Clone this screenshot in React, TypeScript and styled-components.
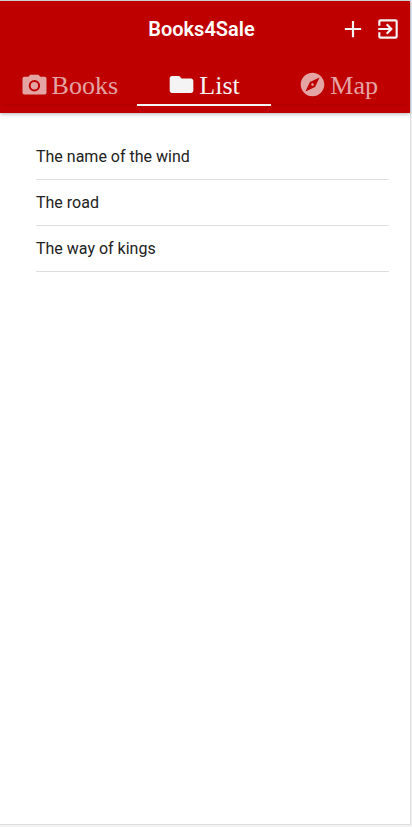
import React, { useState } from "react";
import styled, { createGlobalStyle } from "styled-components";
import { IoMdAdd, IoMdCompass, IoMdExit, IoMdFolder } from "react-icons/io";

const GlobalStyle = createGlobalStyle`
  * { box-sizing: border-box; }
  body { margin: 0; background: #f1f1f1; }
`;

const Page = styled.div`
  display: flex;
  flex-direction: column;
  min-height: calc(100vh - 2px);
  margin: 0 1px 2px 0;
  border: 1px solid #dedede;
  border-left: 0;
  background: #fff;
  font-family: Roboto, sans-serif;
`;

const Header = styled.header`
  background: #bf0000;
  color: #f4f4f4;
  box-shadow: 0 1px 4px rgba(0, 0, 0, 0.3);
`;

const Toolbar = styled.div`
  display: grid;
  grid-template-columns: 1fr auto 1fr;
  align-items: center;
  height: 56px;
  padding: 0 9px 0 8px;
`;

const Title = styled.h1`
  grid-column: 2;
  margin: 0;
  padding-right: 6px;
  color: #fff;
  font-size: 20px;
  line-height: 24px;
  font-weight: 600;
`;

const Actions = styled.div`
  display: flex;
  justify-content: flex-end;
  gap: 9px;
`;

const IconButton = styled.button`
  display: flex;
  padding: 0;
  border: 0;
  background: none;
  color: inherit;
  font-size: 26px;
  cursor: pointer;
`;

const Tabs = styled.nav`
  display: flex;
  height: 56px;
  padding: 0 4px 7px 2px;
`;

const Tab = styled.button<{ $active: boolean }>`
  display: flex;
  flex: 1;
  align-items: center;
  justify-content: center;
  gap: 4px;
  padding: 8px 0 0;
  border: 0;
  border-bottom: 2px solid ${(p) => (p.$active ? "#f4f4f4" : "#b60000")};
  background: none;
  color: ${(p) => (p.$active ? "#f4f4f4" : "#e4a4a4")};
  font: 26px/30px "Liberation Serif", serif;
  cursor: pointer;

  svg { font-size: 27px; }
`;

const TabLabel = styled.span`
  padding-top: 2px;
`;

const BookList = styled.ul`
  margin: 0;
  padding: 21px 21px 21px 36px;
  list-style: none;
`;

const Book = styled.li`
  padding: 12px 0 11px;
  border-bottom: 1px solid #dedede;
  color: #222;
  font-size: 16px;
  line-height: 22px;
`;

function CameraIcon() {
  return (
    <svg width="1em" height="1em" viewBox="0 0 27 27" fill="currentColor" aria-hidden="true">
      <path
        fillRule="evenodd"
        d="M9.2 3.8h8.2l2 2h4.3a1.8 1.8 0 0 1 1.8 1.8v14.2a1.8 1.8 0 0 1-1.8 1.8H3.3a1.8 1.8 0 0 1-1.8-1.8V7.6a1.8 1.8 0 0 1 1.8-1.8h4.1zM13.4 9a5.7 5.7 0 1 0 0 11.4 5.7 5.7 0 0 0 0-11.4z"
      />
      <circle cx="13.4" cy="14.7" r="3.7" />
    </svg>
  );
}

const tabs = [
  { label: "Books", Icon: CameraIcon },
  { label: "List", Icon: IoMdFolder },
  { label: "Map", Icon: IoMdCompass },
];

const books = ["The name of the wind", "The road", "The way of kings"];

export default function App() {
  const [current, setCurrent] = useState("List");

  return (
    <Page>
      <GlobalStyle />
      <Header>
        <Toolbar>
          <Title>Books4Sale</Title>
          <Actions>
            <IconButton type="button" aria-label="Add book">
              <IoMdAdd />
            </IconButton>
            <IconButton type="button" aria-label="Log out">
              <IoMdExit />
            </IconButton>
          </Actions>
        </Toolbar>
        <Tabs>
          {tabs.map(({ label, Icon }) => (
            <Tab
              key={label}
              type="button"
              $active={label === current}
              aria-pressed={label === current}
              onClick={() => setCurrent(label)}
            >
              <Icon />
              <TabLabel>{label}</TabLabel>
            </Tab>
          ))}
        </Tabs>
      </Header>
      <main>
        <BookList>
          {books.map((book) => (
            <Book key={book}>{book}</Book>
          ))}
        </BookList>
      </main>
    </Page>
  );
}
